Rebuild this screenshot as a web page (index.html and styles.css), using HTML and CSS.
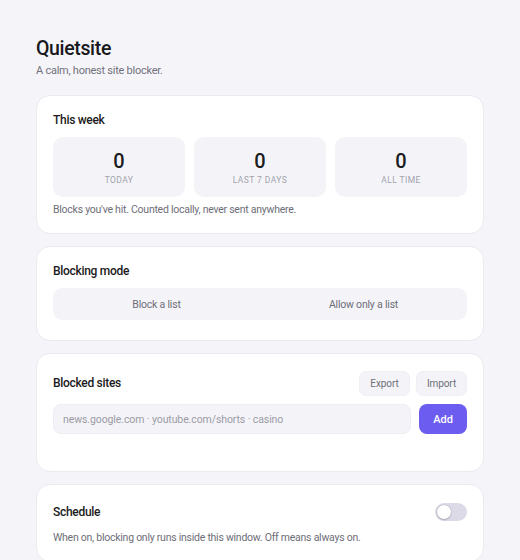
FILE: index.html
```html
<!DOCTYPE html>
<html lang="en">
<head>
<meta charset="utf-8">
<title>Quietsite</title>
<link rel="stylesheet" href="styles.css">
</head>
<body>
<main class="page">
  <header class="app-header">
    <h1 class="app-title">Quietsite</h1>
    <p class="app-sub">A calm, honest site blocker.</p>
  </header>

  <section class="card">
    <h2 class="card-title">This week</h2>
    <div class="stats">
      <div class="stat"><div class="stat-num">0</div><div class="stat-label">Today</div></div>
      <div class="stat"><div class="stat-num">0</div><div class="stat-label">Last 7 days</div></div>
      <div class="stat"><div class="stat-num">0</div><div class="stat-label">All time</div></div>
    </div>
    <p class="note">Blocks you've hit. Counted locally, never sent anywhere.</p>
  </section>

  <section class="card">
    <h2 class="card-title">Blocking mode</h2>
    <div class="segmented">
      <button class="seg">Block a list</button>
      <button class="seg">Allow only a list</button>
    </div>
  </section>

  <section class="card">
    <div class="row row-sites">
      <h2 class="card-title flat">Blocked sites</h2>
      <div class="actions">
        <button class="btn-soft">Export</button>
        <button class="btn-soft">Import</button>
      </div>
    </div>
    <div class="add-row">
      <input class="site-input" type="text" placeholder="news.google.com · youtube.com/shorts · casino">
      <button class="btn-primary">Add</button>
    </div>
    <ul class="site-list"></ul>
  </section>

  <section class="card card-sched">
    <div class="row row-sched">
      <h2 class="card-title flat">Schedule</h2>
      <span class="toggle"><span class="knob"></span></span>
    </div>
    <p class="note sched-note">When on, blocking only runs inside this window. Off means always on.</p>
  </section>
</main>
</body>
</html>
```

FILE: styles.css
```css
* { box-sizing: border-box; }
html, body { margin: 0; padding: 0; }
body {
  background: #f5f5f9;
  font-family: Roboto, "Noto Sans", sans-serif;
  color: #1b1b21;
}
.page {
  width: 448px;
  margin-left: 36px;
  padding-top: 37px;
  display: flex;
  flex-direction: column;
  gap: 12px;
}
.app-header { margin-bottom: 5px; }
.app-title {
  margin: 0;
  font-size: 19.5px;
  line-height: 24px;
  font-weight: 500;
  letter-spacing: -0.35px;
  color: #18181d;
}
.app-sub {
  margin: 2px 0 0;
  font-size: 11px;
  line-height: 15px;
  letter-spacing: -0.25px;
  color: #72727c;
}
.card {
  background: #fff;
  border: 1px solid #eaeaf0;
  border-radius: 14px;
  padding: 16px;
}
.card-title {
  margin: 0 0 9px;
  font-size: 12px;
  line-height: 16px;
  font-weight: 500;
  letter-spacing: -0.3px;
  color: #1b1b21;
}
.card-title.flat { margin: 0; }
.stats {
  display: grid;
  grid-template-columns: repeat(3, 1fr);
  gap: 9px;
}
.stat {
  background: #f4f4f8;
  border-radius: 10px;
  padding: 12px 8px 11px;
  text-align: center;
}
.stat-num {
  font-size: 20px;
  line-height: 24px;
  font-weight: 500;
  color: #1b1b21;
}
.stat-label {
  margin-top: 1px;
  font-size: 8.5px;
  line-height: 12px;
  letter-spacing: 0.05em;
  text-transform: uppercase;
  color: #a2a2ac;
}
.note {
  margin: 6px 0 0;
  font-size: 10.5px;
  line-height: 14px;
  letter-spacing: -0.25px;
  color: #6e6e78;
}
.segmented {
  display: flex;
  background: #f4f4f8;
  border-radius: 9px;
  height: 32px;
  margin-bottom: 4px;
}
.seg {
  flex: 1;
  border: 0;
  background: transparent;
  font-family: inherit;
  font-size: 10.5px;
  letter-spacing: -0.2px;
  color: #6e6e78;
  cursor: pointer;
}
.row {
  display: flex;
  align-items: center;
  justify-content: space-between;
}
.row-sites { height: 26px; }
.row-sched { height: 20px; margin-top: 1px; }
.actions { display: flex; gap: 6px; }
.btn-soft {
  height: 25px;
  width: 51px;
  border: 1px solid #efeff4;
  background: #f4f4f8;
  border-radius: 7px;
  font-family: inherit;
  font-size: 10px;
  letter-spacing: -0.1px;
  color: #6e6e78;
  padding: 0;
}
.add-row {
  display: flex;
  gap: 8px;
  margin-top: 8px;
}
.site-input {
  flex: 1;
  height: 30px;
  border: 1px solid #ededf2;
  background: #f4f4f8;
  border-radius: 8px;
  padding: 0 9px;
  font-family: inherit;
  font-size: 10.5px;
  letter-spacing: -0.1px;
  color: #1b1b21;
  outline: none;
}
.site-input::placeholder { color: #9b9ba5; }
.btn-primary {
  width: 48px;
  height: 30px;
  border: 0;
  border-radius: 8px;
  background: #6c5cf0;
  color: #fff;
  font-family: inherit;
  font-size: 11px;
  font-weight: 500;
}
.site-list {
  list-style: none;
  margin: 10px 0 0;
  padding: 0;
  min-height: 11px;
}
.toggle {
  position: relative;
  display: inline-block;
  width: 32px;
  height: 18px;
  border-radius: 9px;
  background: #dcdae7;
}
.knob {
  position: absolute;
  left: 2px;
  top: 2px;
  width: 14px;
  height: 14px;
  border-radius: 50%;
  background: #fff;
  box-shadow: 0 0 0 0.5px rgba(0,0,0,0.15), 0 1px 2px rgba(0,0,0,0.18);
}
.sched-note { margin-top: 9px; }
```
